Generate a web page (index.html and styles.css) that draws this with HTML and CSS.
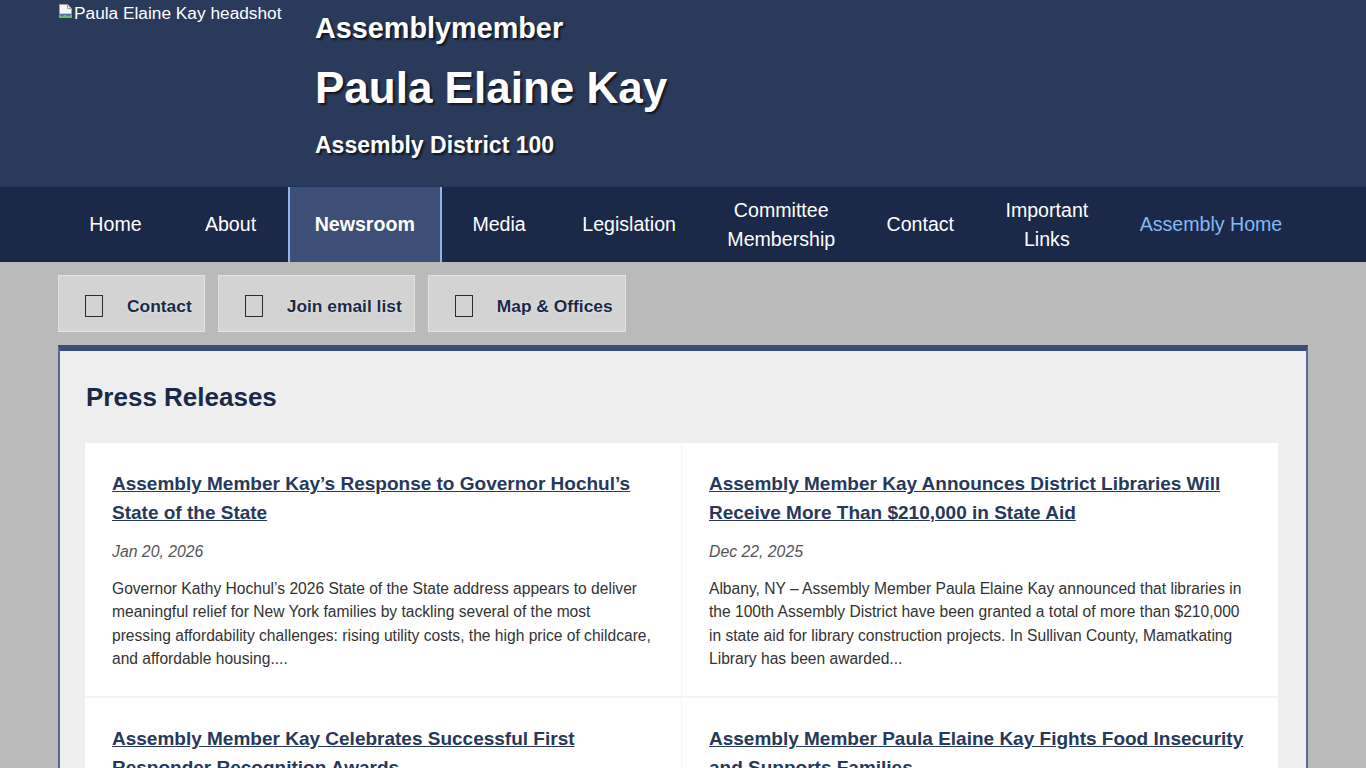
FILE: index.html
```html
<!DOCTYPE html>
<html lang="en">

<head>
    <meta charset="UTF-8">
    <meta name="viewport" content="width=device-width, initial-scale=1.0">
    <title>Assemblymember Paula Elaine Kay - Newsroom</title>
    <link rel="stylesheet" href="styles.css">
</head>

<body>

    <header class="site-header">
        <div class="wrap header-inner">
            <div class="headshot">
                <svg class="broken-img" width="16" height="16" viewBox="0 0 16 16" aria-hidden="true">
                    <path d="M1.5 1.5h8l4 4v5.5h-12z" fill="#f6f6f6" stroke="#a0a0a0" stroke-width="1"/>
                    <path d="M9.5 1.5v4h4" fill="#dcdcdc" stroke="#a0a0a0" stroke-width="1"/>
                    <path d="M1 11l3 2 3-2 3 2 4-2v4H1z" fill="#6bbf5a"/>
                    <path d="M1 11l3 2 3-2 3 2 4-2" fill="none" stroke="#3c7fd0" stroke-width="1"/>
                </svg>
                <span>Paula Elaine Kay headshot</span>
            </div>
            <div class="titles">
                <p class="title-role">Assemblymember</p>
                <h1 class="title-name">Paula Elaine Kay</h1>
                <p class="title-district">Assembly District 100</p>
            </div>
        </div>
    </header>

    <nav class="main-nav">
        <ul class="wrap nav-list">
            <li><a href="#">Home</a></li>
            <li><a href="#">About</a></li>
            <li class="active"><a href="#">Newsroom</a></li>
            <li><a href="#">Media</a></li>
            <li><a href="#">Legislation</a></li>
            <li><a href="#">Committee<br>Membership</a></li>
            <li><a href="#">Contact</a></li>
            <li><a href="#">Important<br>Links</a></li>
            <li class="external"><a href="#">Assembly Home</a></li>
        </ul>
    </nav>

    <main class="wrap">
        <div class="quick-links">
            <a href="#" class="quick-link"><span class="ql-icon"></span>Contact</a>
            <a href="#" class="quick-link"><span class="ql-icon"></span>Join email list</a>
            <a href="#" class="quick-link"><span class="ql-icon"></span>Map &amp; Offices</a>
        </div>

        <section class="panel">
            <h2>Press Releases</h2>

            <div class="release-grid">
                <article class="release">
                    <h3><a href="#">Assembly Member Kay’s Response to Governor Hochul’s State of the State</a></h3>
                    <p class="release-date">Jan 20, 2026</p>
                    <p class="release-text">Governor Kathy Hochul’s 2026 State of the State address appears to deliver meaningful relief for New York families by tackling several of the most pressing affordability challenges: rising utility costs, the high price of childcare, and affordable housing....</p>
                </article>

                <article class="release">
                    <h3><a href="#">Assembly Member Kay Announces District Libraries Will Receive More Than $210,000 in State Aid</a></h3>
                    <p class="release-date">Dec 22, 2025</p>
                    <p class="release-text">Albany, NY – Assembly Member Paula Elaine Kay announced that libraries in the 100th Assembly District have been granted a total of more than $210,000 in state aid for library construction projects. In Sullivan County, Mamatkating Library has been awarded...</p>
                </article>

                <article class="release">
                    <h3><a href="#">Assembly Member Kay Celebrates Successful First Responder Recognition Awards</a></h3>
                </article>

                <article class="release">
                    <h3><a href="#">Assembly Member Paula Elaine Kay Fights Food Insecurity and Supports Families</a></h3>
                </article>
            </div>
        </section>
    </main>

</body>

</html>
```

FILE: styles.css
```css
body {
    font-family: "Liberation Sans", Arial, sans-serif;
    background-color: #bababa;
    margin: 0;
    padding: 0;
}

.wrap {
    width: 1250px;
    margin: 0 auto;
}

/* Header */

.site-header {
    background-color: #2a3a5a;
    color: #fff;
    height: 186px;
}

.header-inner {
    display: flex;
    gap: 32px;
}

.headshot {
    width: 225px;
    padding-top: 3px;
    display: flex;
    align-items: flex-start;
    font-size: 17.3px;
    line-height: 20px;
    white-space: nowrap;
}

.titles {
    display: flex;
    flex-direction: column;
    gap: 18px;
    padding-top: 11px;
}

.titles p,
.titles h1 {
    margin: 0;
    font-weight: bold;
    text-shadow: 2px 2px 2px rgba(0, 0, 0, 0.6);
}

.title-role {
    font-size: 28.8px;
    line-height: 34px;
}

.title-name {
    font-size: 44px;
    line-height: 50px;
}

.title-district {
    font-size: 23px;
    line-height: 28px;
}

/* Navigation */

.main-nav {
    background-color: #1b2949;
    border-top: 1px solid #24355a;
}

.nav-list {
    list-style: none;
    padding: 0;
    display: flex;
    height: 75px;
}

.nav-list li {
    flex: 1 1 auto;
    min-width: 115px;
    display: flex;
}

.nav-list a {
    flex: 1;
    display: flex;
    align-items: center;
    justify-content: center;
    padding: 0 24px;
    color: #fff;
    text-decoration: none;
    text-align: center;
    font-size: 19.6px;
    line-height: 29px;
    white-space: nowrap;
}

.nav-list .active a {
    background-color: #3d4f77;
    border-left: 2px solid #8db6e6;
    border-right: 2px solid #8db6e6;
    font-weight: bold;
    padding: 0 23px;
}

.nav-list .external a {
    color: #84baf3;
}

/* Quick links */

.quick-links {
    display: flex;
    gap: 13px;
    margin: 13px 0;
}

.quick-link {
    display: flex;
    align-items: center;
    gap: 24px;
    height: 50px;
    padding: 5px 12px 0 26px;
    background-color: #d3d3d3;
    border: 1px solid #e3e3e3;
    color: #1b2949;
    font-size: 17.4px;
    font-weight: bold;
    text-decoration: none;
    text-shadow: 0 0 2px rgba(255, 255, 255, 0.8);
}

.ql-icon {
    width: 16px;
    height: 20px;
    border: 1px solid #2b2b2b;
}

/* Press releases panel */

.panel {
    background-color: #eeeeee;
    border: 2px solid #5a6896;
    border-top: 6px solid #3b4d74;
    padding: 31px 28px 0 25px;
}

.panel h2 {
    margin: 0 0 30px 1px;
    font-size: 26px;
    line-height: 31px;
    color: #1b2949;
}

.release-grid {
    display: grid;
    grid-template-columns: 1fr 1fr;
    gap: 2px 1px;
    background-color: #f4f4f4;
}

.release {
    background-color: #fff;
    padding: 26px 28px 25px 27px;
}

.release h3 {
    margin: 0;
    font-size: 19px;
    line-height: 29px;
}

.release h3 a {
    color: #27385a;
}

.release-date {
    margin: 13px 0;
    font-style: italic;
    font-size: 15.8px;
    line-height: 24px;
    color: #555;
}

.release-text {
    margin: 0;
    font-size: 15.6px;
    line-height: 23.4px;
    color: #333;
}
```
